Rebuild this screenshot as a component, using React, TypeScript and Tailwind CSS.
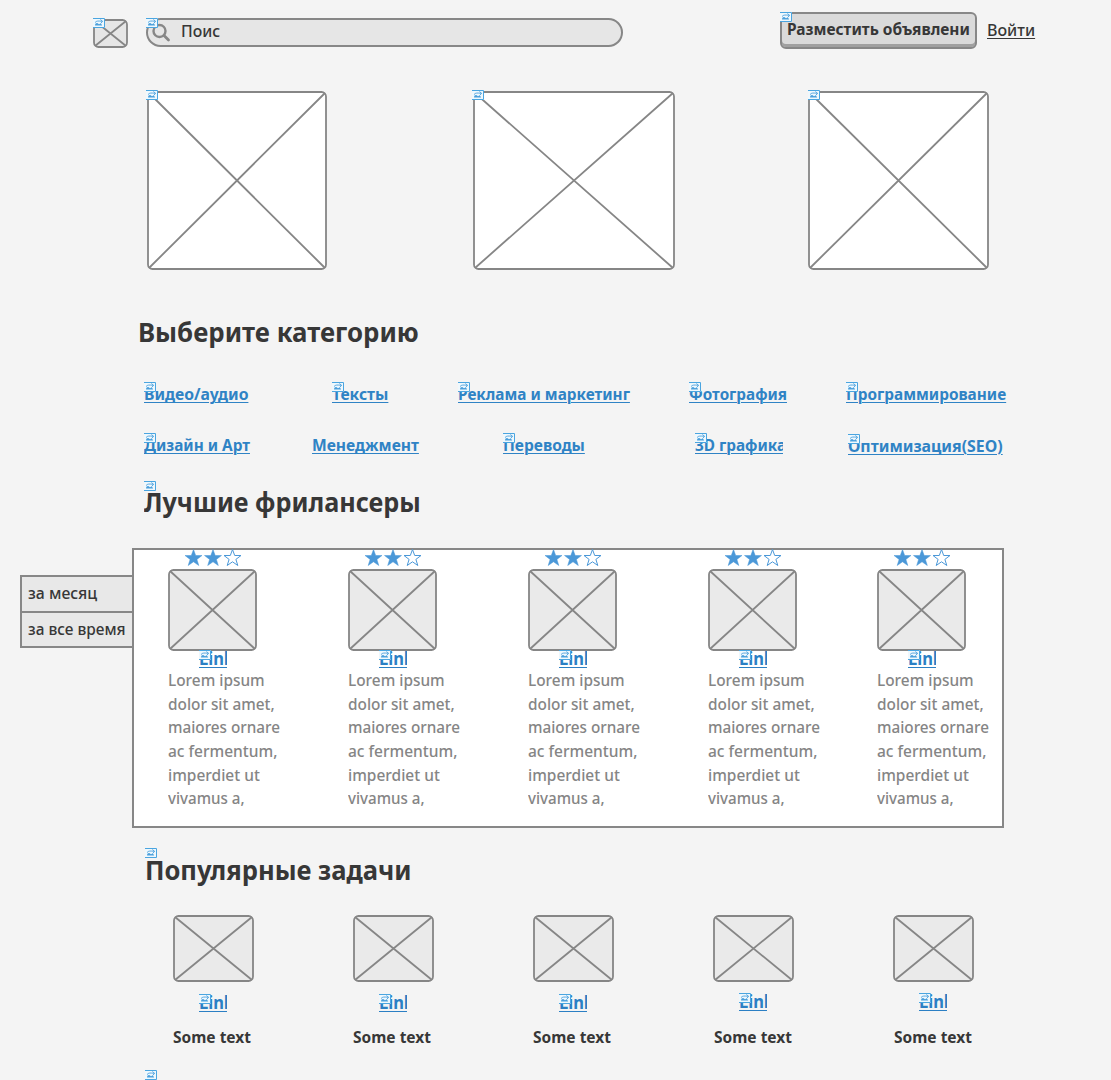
import { useLayoutEffect, useRef, useState } from "react";
import type { ReactNode } from "react";

/* A single line of text, condensed or widened so that it fills `width` pixels. */
function Line({ width, className = "", children }: { width: number; className?: string; children: ReactNode }) {
  const ref = useRef<HTMLSpanElement>(null);
  const [scale, setScale] = useState(1);
  useLayoutEffect(() => {
    if (ref.current) setScale(width / ref.current.offsetWidth);
  }, [width]);
  return (
    <span ref={ref} className={`inline-block origin-left whitespace-nowrap ${className}`} style={{ transform: `scaleX(${scale})` }}>
      {children}
    </span>
  );
}

function Badge({ className }: { className: string }) {
  return (
    <svg viewBox="0 0 12 10" className={`absolute z-10 h-[10px] w-[12px] ${className}`}>
      <rect width="12" height="10" fill="#eff8fd" />
      <path d="M0 .5h11.5v9H0" fill="none" stroke="#4aa5e0" />
      <path d="M2 7.5C2.2 5.6 3.3 4.8 4.6 5.2L6 6.2l1.8-.9L9.2 7.5z" fill="#4a9fdc" />
      <path d="M2 4.6C3.4 2.6 5.5 2.9 9.3 3.3M7.4 1.5l2.3 1.9-1.9 1.8" fill="none" stroke="#4a9fdc" strokeWidth="0.9" />
    </svg>
  );
}

function Placeholder({ w, h, fill, className = "" }: { w: number; h: number; fill: string; className?: string }) {
  return (
    <svg width={w} height={h} viewBox={`0 0 ${w} ${h}`} className={`block shrink-0 ${className}`}>
      <rect x="1" y="1" width={w - 2} height={h - 2} rx="4.5" fill={fill} stroke="#868686" strokeWidth="1.8" />
      <path d={`M2 2L${w - 2} ${h - 2}M${w - 2} 2L2 ${h - 2}`} stroke="#868686" strokeWidth="1.8" />
    </svg>
  );
}

function Category({ label, width, badge = true, className = "" }: { label: string; width: number; badge?: boolean; className?: string }) {
  return (
    <a className={`relative block h-6 ${className}`}>
      {badge && <Badge className="left-0 top-0" />}
      <Line width={width} className="leading-6 underline decoration-1 underline-offset-[2px]">{label}</Line>
    </a>
  );
}

function ShortLink({ className = "" }: { className?: string }) {
  return (
    <a className={`relative block h-[18px] w-7 text-[17px] font-bold text-[#2b7fc4] ${className}`}>
      <Badge className="left-0 top-0" />
      <span className="block h-[18px] w-7 overflow-hidden border-b-[1.5px] border-[#2b7fc4] leading-[17px]">
        <span className="block w-10 origin-left scale-x-[0.97] leading-[18px]">Link</span>
      </span>
    </a>
  );
}

const STAR = "M9 0.5l2.2 6h6.3l-5.1 3.9 1.9 6.1L9 12.8l-5.3 3.7 1.9-6.1L.5 6.5h6.3z";

function Stars() {
  return (
    <svg viewBox="0 0 58 17" className="-mt-px ml-[16px] block h-[17px] w-[58px]">
      {[0, 19.5, 39].map((x, i) => (
        <path
          key={x}
          d={STAR}
          transform={`translate(${x + 0.5} 0)`}
          fill={i < 2 ? "#4b98d8" : "#fff"}
          stroke="#4b98d8"
          strokeWidth={i < 2 ? 0.5 : 1}
        />
      ))}
    </svg>
  );
}

const BIO: [string, number][] = [
  ["Lorem ipsum", 97],
  ["dolor sit amet,", 107],
  ["maiores ornare", 112],
  ["ac fermentum,", 109],
  ["imperdiet ut", 92],
  ["vivamus a,", 77],
];

function Freelancer() {
  return (
    <div>
      <Stars />
      <Placeholder w={89} h={82} fill="#eaeaea" className="mt-[3px]" />
      <ShortLink className="-mt-px ml-[31px]" />
      <p className="text-[16.5px] font-medium leading-[23.7px] text-[#858585]">
        {BIO.map(([text, width]) => (
          <span key={text} className="block h-[23.7px]">
            <Line width={width}>{text}</Line>
          </span>
        ))}
      </p>
    </div>
  );
}

export default function App() {
  return (
    <div className="h-[1080px] w-[1111px] overflow-hidden bg-[#f4f4f4] font-['Noto_Sans',sans-serif] text-[#373737]">
      <header className="flex h-[91px] items-start pl-[93px]">
        <div className="relative mt-[19px]">
          <Placeholder w={35} h={29} fill="#e6e6e6" />
          <Badge className="left-0 top-[-1px]" />
        </div>
        <div className="relative ml-[18px] mt-[18px] flex h-[29px] w-[477px] rounded-full border-2 border-[#878787] bg-[#e6e6e6]">
          <Badge className="left-[-2px] top-[-2px]" />
          <svg viewBox="0 0 20 20" className="ml-[3px] mt-[3px] h-5 w-5" fill="none" stroke="#878787">
            <circle cx="8.5" cy="8" r="6" strokeWidth="2.4" />
            <path d="M13 12.5l4.5 4.5" strokeWidth="2.8" strokeLinecap="round" />
          </svg>
          <span className="ml-[10px] text-[17px] font-medium leading-[22px]">
            <Line width={39}>Поис</Line>
          </span>
        </div>
        <button className="relative ml-[157px] mt-[12px] h-[37px] w-[197px] rounded-[6px] border-2 border-[#878787] bg-[#dadada] pl-[5px] text-left text-[16.5px] font-bold leading-[26px] shadow-[inset_0_-3px_0_#a0a0a0]">
          <Badge className="left-[-2px] top-[-2px]" />
          <Line width={183} className="-translate-y-[2px]">Разместить объявлени</Line>
        </button>
        <a className="ml-[10px] mt-[19px] text-[17px] leading-[22px]">
          <Line width={48} className="font-medium underline decoration-[1px] underline-offset-[2px]">Войти</Line>
        </a>
      </header>

      <section className="flex pl-[147px]">
        <div className="relative">
          <Placeholder w={180} h={179} fill="#fff" />
          <Badge className="left-[-1px] top-[-1px]" />
        </div>
        <div className="relative ml-[146px]">
          <Placeholder w={202} h={179} fill="#fff" />
          <Badge className="left-[-1px] top-[-1px]" />
        </div>
        <div className="relative ml-[133px]">
          <Placeholder w={181} h={179} fill="#fff" />
          <Badge className="left-0 top-[-1px]" />
        </div>
      </section>

      <h2 className="ml-[138px] mt-[44px] h-9 text-[27px] font-bold leading-9">
        <Line width={281}>Выберите категорию</Line>
      </h2>

      <nav className="mt-[32px] text-[16.5px] font-bold text-[#2f83c5]">
        <div className="grid h-[51px] grid-cols-[188px_126px_231px_157px_1fr] pl-[144px]">
          <Category label="Видео/аудио" width={104} />
          <Category label="Тексты" width={56} />
          <Category label="Реклама и маркетинг" width={172} />
          <Category label="Фотография" width={98} />
          <Category label="Программирование" width={160} />
        </div>
        <div className="grid h-[51px] grid-cols-[168px_191px_192px_153px_1fr] pl-[144px]">
          <Category label="Дизайн и Арт" width={106} />
          <Category label="Менеджмент" width={107} badge={false} />
          <Category label="Переводы" width={82} />
          <Category label="3D графика" width={91} className="w-[88px] overflow-hidden" />
          <Category label="Оптимизация(SEO)" width={155} className="mt-[1px]" />
        </div>
      </nav>

      <h2 className="relative ml-[144px] mt-0 h-9 text-[27px] font-bold leading-9">
        <Badge className="left-0 top-[-3px]" />
        <Line width={277}>Лучшие фрилансеры</Line>
      </h2>

      <section className="mt-[28px] flex pl-[20px]">
        <div className="mt-[27px] h-[73px] w-[113px] border-2 border-r-0 border-[#878787] bg-[#e8e8e8] text-[16.5px] font-medium">
          <div className="h-[36px] border-b-2 border-[#878787] pl-[6px] leading-[32px]">
            <Line width={69}>за месяц</Line>
          </div>
          <div className="pl-[6px] leading-[32px]">
            <Line width={98}>за все время</Line>
          </div>
        </div>
        <div className="-ml-px grid h-[280px] w-[872px] grid-cols-[180px_180px_180px_169px_1fr] border-2 border-[#878787] bg-white pl-[34px]">
          <Freelancer />
          <Freelancer />
          <Freelancer />
          <Freelancer />
          <Freelancer />
        </div>
      </section>

      <h2 className="relative ml-[145px] mt-[24px] h-9 text-[27px] font-bold leading-9">
        <Badge className="left-0 top-[-4px]" />
        <Line width={267}>Популярные задачи</Line>
      </h2>

      <section className="mt-[27px] grid h-[155px] grid-cols-[180px_180px_180px_180px_180px] pl-[173px]">
        {[0, 1, 2, 3, 4].map((i) => (
          <div key={i}>
            <Placeholder w={81} h={67} fill="#eaeaea" />
            <ShortLink className={i > 2 ? "ml-[26px] mt-[11px]" : "ml-[26px] mt-[12px]"} />
            <div className={`text-[16.5px] font-bold leading-6 ${i > 2 ? "ml-px mt-[14px]" : "mt-[13px]"}`}>
              <Line width={78}>Some text</Line>
            </div>
          </div>
        ))}
      </section>
      <div className="relative ml-[145px]">
        <Badge className="left-0 top-0" />
      </div>
    </div>
  );
}
